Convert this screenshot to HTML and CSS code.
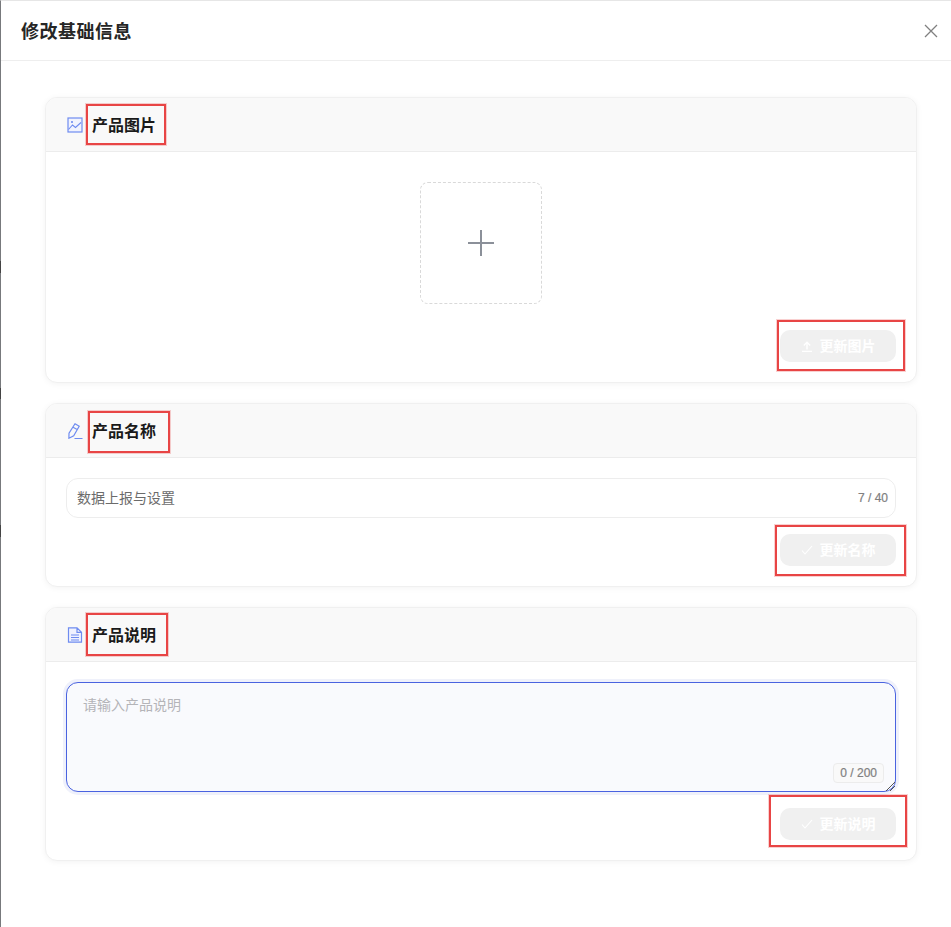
FILE: index.html
```html
<!DOCTYPE html>
<html lang="zh">
<head>
<meta charset="utf-8">
<title>修改基础信息</title>
<link rel="stylesheet" href="styles.css">
</head>
<body>
<div class="dialog">
  <header class="dialog-head">
    <h1 class="dialog-title">修改基础信息</h1>
    <svg class="close" viewBox="0 0 14 14" width="14" height="14"><path d="M1 1l12 12M13 1L1 13" fill="none" stroke="#808080" stroke-width="1.300"/></svg>
  </header>
  <main class="dialog-body">
    <section class="card">
      <div class="card-head">
        <svg class="card-icon" viewBox="0 0 16 16" width="16" height="16"><rect x="1" y="1" width="14" height="14" fill="#f1f3fe" stroke="#6f8cf0" stroke-width="1.200"/><path d="M1.500 12.500l4-4.500 3 2.500 5.500-5" fill="none" stroke="#6f8cf0" stroke-width="1.100"/><circle cx="5" cy="5" r="1.100" fill="#6f8cf0"/></svg>
        <h2 class="card-title">产品图片</h2>
      </div>
      <div class="card-body card-body-image">
        <div class="upload">
          <svg viewBox="0 0 26 26" width="26" height="26"><path d="M13 0v26M0 13h26" stroke="#8b9099" stroke-width="2" fill="none"/></svg>
        </div>
        <div class="actions actions-image">
          <button class="btn" disabled>
            <svg viewBox="0 0 12 12" width="12" height="12"><path d="M1 11.500h10M6 9.500V2.500M2.800 5.500L6 2.300l3.200 3.200" fill="none" stroke="#fff" stroke-width="1.400"/></svg>
            <span class="btn-label">更新图片</span>
          </button>
        </div>
      </div>
    </section>
    <section class="card">
      <div class="card-head">
        <svg class="card-icon" viewBox="0 0 16 16" width="16" height="16"><path d="M8 .8l4.200 2.400-5.500 9.600-4.800 2.400.1-5zM6 4.200l4.200 2.400M7.500 15.500h8" fill="none" stroke="#6f8cf0" stroke-width="1.200"/></svg>
        <h2 class="card-title">产品名称</h2>
      </div>
      <div class="card-body">
        <div class="input">
          <span class="input-value">数据上报与设置</span>
          <span class="input-count">7 / 40</span>
        </div>
        <div class="actions">
          <button class="btn" disabled>
            <svg viewBox="0 0 12 12" width="12" height="12"><path d="M1 6.500l3 3.500 7-8" fill="none" stroke="#fff" stroke-width="1.100"/></svg>
            <span class="btn-label">更新名称</span>
          </button>
        </div>
      </div>
    </section>
    <section class="card">
      <div class="card-head">
        <svg class="card-icon" viewBox="0 0 16 16" width="16" height="16"><path d="M1.500 .8h8.500l4.500 4.500v9.900h-13zM10 .8v4.500h4.500M4 8h8M4 10.500h8M4 13h8" fill="#f1f3fe" stroke="#6f8cf0" stroke-width="1.200"/></svg>
        <h2 class="card-title">产品说明</h2>
      </div>
      <div class="card-body">
        <div class="textarea">
          <span class="placeholder">请输入产品说明</span>
          <span class="textarea-count">0 / 200</span>
          <svg class="grip" viewBox="0 0 9 9" width="9" height="9"><path d="M0 9l9-9M4 9l5-5" stroke="#555" stroke-width="1" fill="none"/></svg>
        </div>
        <div class="actions">
          <button class="btn" disabled>
            <svg viewBox="0 0 12 12" width="12" height="12"><path d="M1 6.500l3 3.500 7-8" fill="none" stroke="#fff" stroke-width="1.100"/></svg>
            <span class="btn-label">更新说明</span>
          </button>
        </div>
      </div>
    </section>
  </main>
  <div class="tick tick-1"></div>
  <div class="tick tick-2"></div>
  <div class="tick tick-3"></div>
  <div class="mark mark-1"></div>
  <div class="mark mark-2"></div>
  <div class="mark mark-3"></div>
  <div class="mark mark-4"></div>
  <div class="mark mark-5"></div>
  <div class="mark mark-6"></div>
</div>
</body>
</html>
```
FILE: styles.css
```css
* { box-sizing: border-box; }
html, body { margin: 0; padding: 0; height: 100%; background: #fff; overflow: hidden; }
body { font-family: "Noto Sans CJK SC", "Liberation Sans", sans-serif; color: #1f1f1f; }
.dialog {
  position: relative;
  height: 927px;
  border-top: 1px solid #e6e6e6;
  border-left: 1px solid #77797c;
}
.dialog-head {
  height: 60px;
  border-bottom: 1px solid #eeeeee;
  display: flex;
  align-items: center;
  justify-content: space-between;
  padding: 0 13px 0 20px;
}
.dialog-title { margin: 0 0 1px; font-size: 18px; font-weight: 700; letter-spacing: 0.5px; color: #262626; line-height: 24px; }
.close { display: block; }
.dialog-body { padding: 36px 34px 0 44px; display: flex; flex-direction: column; gap: 20px; }
.card {
  border: 1px solid #f0f0f0;
  border-radius: 12px;
  background: #fff;
  box-shadow: 0 1px 6px rgba(0, 0, 0, 0.05);
  overflow: hidden;
}
.card-head {
  height: 54px;
  background: #f9f9f9;
  border-bottom: 1px solid #ececec;
  display: flex;
  align-items: center;
  gap: 9px;
  padding: 0 0 0 21px;
}
.card-icon { display: block; flex: none; }
.card-title { margin: 0 0 2px; font-size: 16px; font-weight: 700; color: #1a1a1a; line-height: 22px; }
.card-body { padding: 20px; }
.card-body-image { padding-top: 30px; }
.upload {
  width: 122px;
  height: 122px;
  margin: 0 auto;
  border: 1px dashed #d9d9d9;
  border-radius: 8px;
  display: flex;
  align-items: center;
  justify-content: center;
}
.actions { display: flex; justify-content: flex-end; margin-top: 16px; }
.actions-image { margin-top: 26px; }
.btn {
  width: 116px;
  height: 32px;
  border: 0;
  border-radius: 10px;
  background: #f0f0f0;
  color: #fff;
  font: 700 14px/20px "Noto Sans CJK SC", "Liberation Sans", sans-serif;
  display: flex;
  align-items: center;
  justify-content: center;
  gap: 7px;
  padding: 0;
}
.btn-label { margin-bottom: 2px; }
.input {
  height: 40px;
  border: 1px solid #ededed;
  border-radius: 12px;
  display: flex;
  align-items: center;
  justify-content: space-between;
  padding: 0 7px 0 10px;
}
.input-value { font-size: 14px; line-height: 20px; margin-bottom: 3px; color: #6b6b6b; }
.input-count { font: 400 12px "Liberation Sans", sans-serif; color: #808080; -webkit-text-stroke: 0.2px #808080; }
.textarea {
  position: relative;
  height: 110px;
  border: 1px solid #4a63e0;
  border-radius: 12px;
  background: #f9fafd;
  box-shadow: 0 0 0 3px #eff1fb;
  padding: 11px 16px;
  font-size: 14px;
  line-height: 20px;
}
.placeholder { color: #b4b4b8; }
.textarea-count {
  position: absolute;
  right: 11px;
  bottom: 8px;
  height: 20px;
  padding: 0 6px;
  border: 1px solid #ececec;
  border-radius: 4px;
  background: #f9f9f9;
  font: 400 12px/18px "Liberation Sans", sans-serif;
  color: #808080;
  -webkit-text-stroke: 0.2px #808080;
}
.grip { position: absolute; right: 0; bottom: 0; display: block; }
.tick { position: absolute; left: -1px; width: 1px; background: #444; }
.tick-1 { top: 260px; height: 12px; }
.tick-2 { top: 387px; height: 11px; }
.tick-3 { top: 524px; height: 12px; }
.mark { position: absolute; border: 2px solid #e84545; box-shadow: 0 0 0 1px rgba(232, 69, 69, 0.25); pointer-events: none; }
.mark-1 { left: 85px; top: 103px; width: 80px; height: 41px; }
.mark-2 { left: 776px; top: 319px; width: 128px; height: 51px; }
.mark-3 { left: 87px; top: 410px; width: 82px; height: 42px; }
.mark-4 { left: 774px; top: 524px; width: 131px; height: 51px; }
.mark-5 { left: 85px; top: 612px; width: 82px; height: 43px; }
.mark-6 { left: 768px; top: 794px; width: 138px; height: 52px; }
```
